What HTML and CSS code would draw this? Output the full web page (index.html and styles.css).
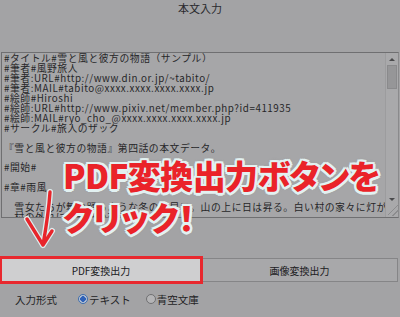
FILE: index.html
```html
<!DOCTYPE html>
<html lang="ja">
<head>
<meta charset="utf-8">
<title>本文入力</title>
<link rel="stylesheet" href="styles.css">
</head>
<body>
<div class="page">
  <header class="head"><h1 class="title">本文入力</h1></header>
  <div class="editor">
    <div class="text">#タイトル#雪と風と彼方の物語（サンプル）
#筆者#風野旅人
#筆者:URL#http://www.din.or.jp/~tabito/
#筆者:MAIL#tabito@xxxx.xxxx.xxxx.xxxx.jp
#絵師#Hiroshi
#絵師:URL#http://www.pixiv.net/member.php?id=411935
#絵師:MAIL#ryo_cho_@xxxx.xxxx.xxxx.xxxx.jp
#サークル#旅人のザック

『雪と風と彼方の物語』第四話の本文データ。

#開始#

#章#雨風

　雪女たちが舞い踊るような冬の朝早い。山の上に日は昇る。白い村の家々に灯がともり、旅人は目を覚ました。
　村の外れに、一軒の宿があった。</div>
    <div class="scroll">
      <span class="arrow up"></span>
      <span class="thumb"></span>
      <span class="track"></span>
      <span class="arrow down"></span>
      <span class="grip"></span>
    </div>
  </div>
  <div class="buttons">
    <button class="btn btn-pdf">PDF変換出力</button>
    <button class="btn btn-img">画像変換出力</button>
  </div>
  <div class="options">
    <span class="label">入力形式</span>
    <span class="radio checked"></span><span class="opt">テキスト</span>
    <span class="radio"></span><span class="opt">青空文庫</span>
  </div>

  <div class="callout">
    <div class="line1">PDF変換出力ボタンを</div>
    <div class="line2">クリック！</div>
  </div>
  <svg class="pointer" width="50" height="70" viewBox="0 0 50 70">
    <path class="halo" d="M30 6 C29 22 26 42 23 59 M7 33 L23 59 L32 45"/>
    <path class="ink" d="M30 6 C29 22 26 42 23 59 M7 33 L23 59 L32 45"/>
  </svg>
</div>
</body>
</html>
```
FILE: styles.css
```css
html, body {
  margin: 0;
  padding: 0;
}
body {
  background: #a3a3a5;
  width: 400px;
  height: 317px;
  overflow: hidden;
  font-family: "Noto Sans CJK JP", sans-serif;
  color: #222;
}
.page {
  position: relative;
  width: 400px;
  height: 317px;
}
.head {
  height: 52px;
}
.title {
  margin: 0;
  padding-top: 1px;
  font-size: 11px;
  line-height: 14px;
  font-weight: normal;
  text-align: center;
  color: #2a2a2e;
}
.editor {
  display: flex;
  margin: 0 1px;
  height: 164px;
  border: 1px solid #6f6f71;
  border-right-color: #8a8a8c;
  background: #a6a6a8;
}
.text {
  flex: 1;
  overflow: hidden;
  white-space: pre;
  padding: 1px 0 0 2px;
  font-family: "Noto Sans CJK JP", sans-serif;
  font-size: 9.8px;
  line-height: 9.95px;
  letter-spacing: 0.55px;
  color: #262628;
}
.scroll {
  width: 12px;
  display: flex;
  flex-direction: column;
  align-items: center;
  background: #a9a9ab;
  border-left: 1px solid #9c9c9e;
}
.arrow {
  width: 0;
  height: 0;
  border-left: 3px solid transparent;
  border-right: 3px solid transparent;
}
.arrow.up {
  margin-top: 5px;
  border-bottom: 3px solid #4a4a4c;
}
.arrow.down {
  margin-bottom: 16px;
  border-top: 3px solid #4a4a4c;
}
.thumb {
  margin-top: 4px;
  width: 8px;
  height: 22px;
  background: #969698;
  border: 1px solid #8a8a8c;
}
.track {
  flex: 1;
}
.grip {
  position: absolute;
  right: 1px;
  top: 204px;
  width: 11px;
  height: 12px;
  background:
    linear-gradient(135deg, transparent 45%, #8c8c8e 45%, #8c8c8e 52%, transparent 52%, transparent 68%, #8c8c8e 68%, #8c8c8e 75%, transparent 75%);
}
.buttons {
  display: grid;
  grid-template-columns: 200px 197px;
  margin: 40px 1px 0 1px;
  height: 24px;
}
.btn {
  font-family: "Noto Sans CJK JP", sans-serif;
  font-size: 10px;
  color: #202022;
  padding: 0;
  margin: 0;
  height: 24px;
  border: 1px solid #858587;
}
.btn-pdf {
  background: #cfcfd0;
  outline: 3px solid #e8282e;
  outline-offset: -1px;
  position: relative;
  z-index: 1;
}
.btn-img {
  background: #a8a8aa;
  border-left: 1px solid #8d8d8f;
}
.options {
  display: flex;
  align-items: center;
  height: 16px;
  margin-top: 9px;
  font-size: 10.5px;
  color: #232325;
}
.label {
  margin-left: 15px;
  margin-right: 21px;
}
.radio {
  width: 8px;
  height: 8px;
  border-radius: 50%;
  border: 1px solid #707072;
  background: #b4b4b6;
  margin-right: 1px;
  box-sizing: content-box;
}
.radio.checked {
  border-color: #3f6fb0;
  background: radial-gradient(circle, #2f62b8 0 2.6px, #b9c3d2 3px);
}
.opt + .radio {
  margin-left: 15px;
}
.callout {
  position: absolute;
  left: 63px;
  top: 154px;
  font-family: "Noto Sans CJK JP", sans-serif;
  font-weight: 900;
  font-size: 33px;
  line-height: 42px;
  color: #ea2329;
  font-feature-settings: "palt";
  text-shadow:
    2.5px 0 0 #e2f1f1, -2.5px 0 0 #e2f1f1, 0 2.5px 0 #e2f1f1, 0 -2.5px 0 #e2f1f1,
    1.8px 1.8px 0 #e2f1f1, -1.8px 1.8px 0 #e2f1f1, 1.8px -1.8px 0 #e2f1f1, -1.8px -1.8px 0 #e2f1f1,
    0 0 4px #8a8a8a;
  white-space: nowrap;
}
.line1 {
  letter-spacing: -0.6px;
}
.line2 {
  letter-spacing: 0;
}
.pointer {
  position: absolute;
  left: 20px;
  top: 186px;
  overflow: visible;
}
.pointer path {
  fill: none;
  stroke-linecap: round;
  stroke-linejoin: round;
}
.pointer .halo {
  stroke: #dfeeee;
  stroke-width: 6;
}
.pointer .ink {
  stroke: #e8252b;
  stroke-width: 3.4;
}
```
